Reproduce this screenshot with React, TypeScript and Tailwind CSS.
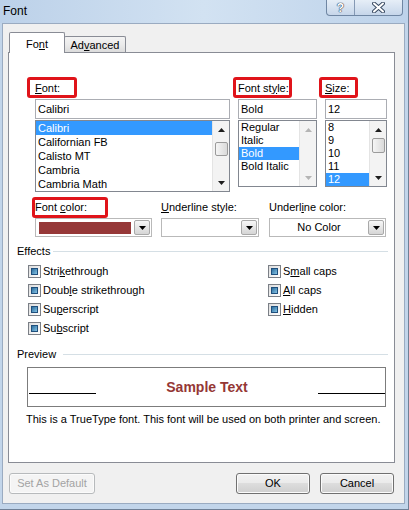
import React from 'react';

// accelerator-key underline
const U = ({ children }: { children: React.ReactNode }) => (
  <span className="underline underline-offset-[1px]">{children}</span>
);

function Label({ box, children }: { box: string; children: React.ReactNode }) {
  return (
    <div className="relative h-[20px] flex items-center">
      <span>{children}</span>
      {/* red annotation box */}
      <span className={`absolute top-[-1px] bottom-0 border-[3px] border-[#e0141a] rounded-[3px] ${box}`} />
    </div>
  );
}

function Arrow({ up, color }: { up?: boolean; color: string }) {
  return (
    <svg width="7" height="4" viewBox="0 0 7 4">
      <path d={up ? 'M3.5 0L7 4H0Z' : 'M0 0H7L3.5 4Z'} fill={color} />
    </svg>
  );
}

function ScrollBar({ thumb, disabled }: { thumb?: string; disabled?: boolean }) {
  const c = disabled ? '#b4b4b4' : '#1e1e1e';
  return (
    <div className="w-[17px] flex flex-col items-center bg-[#f3f3f3] border-l border-[#e4e4e4]">
      <div className="h-[17px] w-full flex items-center justify-center">
        <Arrow up color={c} />
      </div>
      {thumb && (
        <div
          className={`${thumb} w-[13px] rounded-[2px] border border-[#9b9b9b] bg-gradient-to-r from-[#f5f5f5] to-[#dadada]`}
        />
      )}
      <div className="flex-1" />
      <div className="h-[17px] w-full flex items-center justify-center">
        <Arrow color={c} />
      </div>
    </div>
  );
}

function ListBox({
  items,
  sel,
  h,
  rowH,
  thumb,
  disabled,
}: {
  items: string[];
  sel: number;
  h: string;
  rowH: string;
  thumb?: string;
  disabled?: boolean;
}) {
  return (
    <div className={`${h} flex border border-[#828790] bg-white`}>
      <div className="flex-1 flex flex-col">
        {items.map((it, i) => (
          <div
            key={it}
            className={`${rowH} flex items-center pl-[2px] ${i === sel ? 'bg-[#3399ff] text-white' : ''}`}
          >
            {it}
          </div>
        ))}
      </div>
      <ScrollBar thumb={thumb} disabled={disabled} />
    </div>
  );
}

function DropBtn() {
  return (
    <div className="w-[16px] h-[15px] flex items-center justify-center border border-[#a9a9a9] rounded-[2px] bg-gradient-to-b from-[#f7f7f7] to-[#d6d6d6]">
      <Arrow color="#000" />
    </div>
  );
}

function Check({ children }: { children: React.ReactNode }) {
  return (
    <div className="h-[19px] flex items-center">
      <span className="w-[13px] h-[13px] flex p-[2px] border border-[#7b7f86] bg-gradient-to-br from-[#dcdcdc] to-white">
        <span className="flex-1 border border-[#1f4f7c] bg-gradient-to-br from-[#2b6f9e] to-[#84c2e4]" />
      </span>
      <span className="ml-[2px]">{children}</span>
    </div>
  );
}

const btn =
  'h-[21px] rounded-[3px] border flex items-center justify-center shadow-[inset_0_0_0_1px_#fbfbfb]';

export default function App() {
  return (
    <div className="w-[409px] h-[510px] flex flex-col overflow-hidden bg-[#c2d5ea] border-r border-b border-[#6f8096] font-['Liberation_Sans',Arial,sans-serif] text-[11px] text-black leading-none">
      {/* title bar */}
      <div className="h-[23px] shrink-0 flex items-start justify-between pl-[3px] pr-[5px] bg-gradient-to-r from-[#bcd1e9] via-[#d2e2f2] to-[#bdd2ea]">
        <span className="mt-[5px] text-[12px]">Font</span>
        <div className="flex h-[16px] rounded-b-[4px] border border-t-0 border-[#6f86a3] overflow-hidden bg-gradient-to-b from-[#e6eef7] to-[#c6d6ea]">
          <div className="w-[28px] flex items-center justify-center border-r border-[#8599b4] text-[12px] font-bold text-white [text-shadow:0_0_1px_#2f4058,0_0_1px_#2f4058,0_0_1px_#2f4058]">
            ?
          </div>
          <div className="w-[47px] flex items-center justify-center">
            <svg width="13" height="11" viewBox="0 0 13 11">
              <path d="M2 1.5L11 9.5M11 1.5L2 9.5" stroke="#3a4b63" strokeWidth="4" strokeLinecap="round" />
              <path d="M2 1.5L11 9.5M11 1.5L2 9.5" stroke="#fff" strokeWidth="2" strokeLinecap="round" />
            </svg>
          </div>
        </div>
      </div>

      {/* client area */}
      <div className="flex-1 ml-[2px] mr-[3px] mb-[5px] border border-[#9aabc1] bg-[#f0f0f0] flex flex-col">
        {/* tabs */}
        <div className="relative z-10 -mb-px flex items-end pl-[6px] pt-[8px]">
          <div className="w-[56px] h-[21px] pt-[2px] flex items-center justify-center bg-white border border-b-0 border-[#898c95] rounded-t-[2px]">
            Fo<U>n</U>t
          </div>
          <div className="w-[62px] h-[16px] mb-px -ml-px pt-[1px] flex items-center justify-center border border-b-0 border-[#898c95] rounded-t-[2px] bg-gradient-to-b from-[#f3f3f3] via-[#ebebeb] to-[#dcdcdc]">
            Ad<U>v</U>anced
          </div>
        </div>

        {/* tab panel */}
        <div className="ml-[5px] w-[387px] h-[411px] border border-[#898c95] bg-white flex flex-col">
          {/* font / style / size */}
          <div className="flex mt-[25px] ml-[26px] gap-[8px]">
            <div className="w-[195px]">
              <Label box="-left-[8px] w-[50px]">
                <U>F</U>ont:
              </Label>
              <div className="mt-[1px] h-[20px] flex items-center pl-[2px] border border-[#abadb3] bg-white">Calibri</div>
              <div className="mt-[1px]">
                <ListBox
                  h="h-[72px]"
                  rowH="h-[14px]"
                  items={['Calibri', 'Californian FB', 'Calisto MT', 'Cambria', 'Cambria Math']}
                  sel={0}
                  thumb="mt-[4px] h-[14px]"
                />
              </div>
            </div>
            <div className="w-[79px]">
              <Label box="-left-[5px] w-[59px]">
                Font st<U>y</U>le:
              </Label>
              <div className="mt-[1px] h-[20px] flex items-center pl-[2px] border border-[#abadb3] bg-white">Bold</div>
              <div className="mt-[1px]">
                <ListBox
                  h="h-[67px]"
                  rowH="h-[13px]"
                  items={['Regular', 'Italic', 'Bold', 'Bold Italic']}
                  sel={2}
                  disabled
                />
              </div>
            </div>
            <div className="w-[62px]">
              <Label box="-left-[6px] w-[39px]">
                <U>S</U>ize:
              </Label>
              <div className="mt-[1px] h-[20px] flex items-center pl-[2px] border border-[#abadb3] bg-white">12</div>
              <div className="mt-[1px]">
                <ListBox
                  h="h-[67px]"
                  rowH="h-[13px]"
                  items={['8', '9', '10', '11', '12']}
                  sel={4}
                  thumb="h-[15px]"
                />
              </div>
            </div>
          </div>

          {/* colour / underline */}
          <div className="flex mt-[5px] ml-[26px]">
            <div className="w-[117px]">
              <div className="relative h-[21px] flex items-center">
                <span>
                  Font <U>c</U>olor:
                </span>
                <span className="absolute top-0 bottom-0 -left-[3px] w-[76px] border-[3px] border-[#e0141a] rounded-[3px]" />
              </div>
              <div className="h-[19px] flex items-center pr-[1px] border border-[#b9b9b9] bg-white">
                <div className="ml-[3px] w-[92px] h-[12px] bg-[#963838]" />
                <div className="flex-1" />
                <DropBtn />
              </div>
            </div>
            <div className="w-[98px] ml-[9px]">
              <div className="h-[21px] flex items-center">
                <span>
                  <U>U</U>nderline style:
                </span>
              </div>
              <div className="h-[19px] flex items-center justify-end pr-[1px] border border-[#b9b9b9] bg-white">
                <DropBtn />
              </div>
            </div>
            <div className="w-[117px] ml-[10px]">
              <div className="h-[21px] flex items-center">
                <span>
                  Underl<U>i</U>ne color:
                </span>
              </div>
              <div className="h-[19px] flex items-center pr-[1px] border border-[#b9b9b9] bg-white">
                <span className="flex-1 text-center">No Color</span>
                <DropBtn />
              </div>
            </div>
          </div>

          {/* effects */}
          <div className="flex items-center mt-[6px] h-[16px] ml-[8px] mr-[6px]">
            <span>Effects</span>
            <div className="flex-1 ml-[3px] h-px bg-[#d5dfe5]" />
          </div>
          <div className="flex mt-[3px] ml-[19px]">
            <div className="w-[240px]">
              <Check>
                Stri<U>k</U>ethrough
              </Check>
              <Check>
                Doub<U>l</U>e strikethrough
              </Check>
              <Check>
                Su<U>p</U>erscript
              </Check>
              <Check>
                Su<U>b</U>script
              </Check>
            </div>
            <div>
              <Check>
                S<U>m</U>all caps
              </Check>
              <Check>
                <U>A</U>ll caps
              </Check>
              <Check>
                <U>H</U>idden
              </Check>
            </div>
          </div>

          {/* preview */}
          <div className="flex items-center mt-[8px] h-[16px] ml-[8px] mr-[6px]">
            <span>Preview</span>
            <div className="flex-1 ml-[7px] h-px bg-[#d5dfe5]" />
          </div>
          <div className="mt-[5px] ml-[18px] w-[359px] h-[40px] border border-[#7c7c7c] flex items-center pl-[1px]">
            <div className="mt-[12px] w-[67px] h-px bg-black" />
            <span className="flex-1 text-center text-[14px] font-bold text-[#953735]">Sample Text</span>
            <div className="mt-[12px] w-[67px] h-px bg-black" />
          </div>
          <div className="mt-[4px] h-[16px] ml-[17px] flex items-center">
            This is a TrueType font. This font will be used on both printer and screen.
          </div>
        </div>

        {/* buttons */}
        <div className="flex mt-[10px] ml-[6px] mr-[10px]">
          <div className={`${btn} w-[86px] border-[#b7babc] bg-[#f4f4f4] text-[#a3a3a3]`}>Set As Default</div>
          <div className="flex-1" />
          <div
            className={`${btn} w-[74px] border-[#707070] bg-[linear-gradient(#f2f2f2,#ebebeb_45%,#dddddd_50%,#cfcfcf)]`}
          >
            OK
          </div>
          <div
            className={`${btn} w-[74px] ml-[10px] border-[#707070] bg-[linear-gradient(#f2f2f2,#ebebeb_45%,#dddddd_50%,#cfcfcf)]`}
          >
            Cancel
          </div>
        </div>
      </div>
    </div>
  );
}
